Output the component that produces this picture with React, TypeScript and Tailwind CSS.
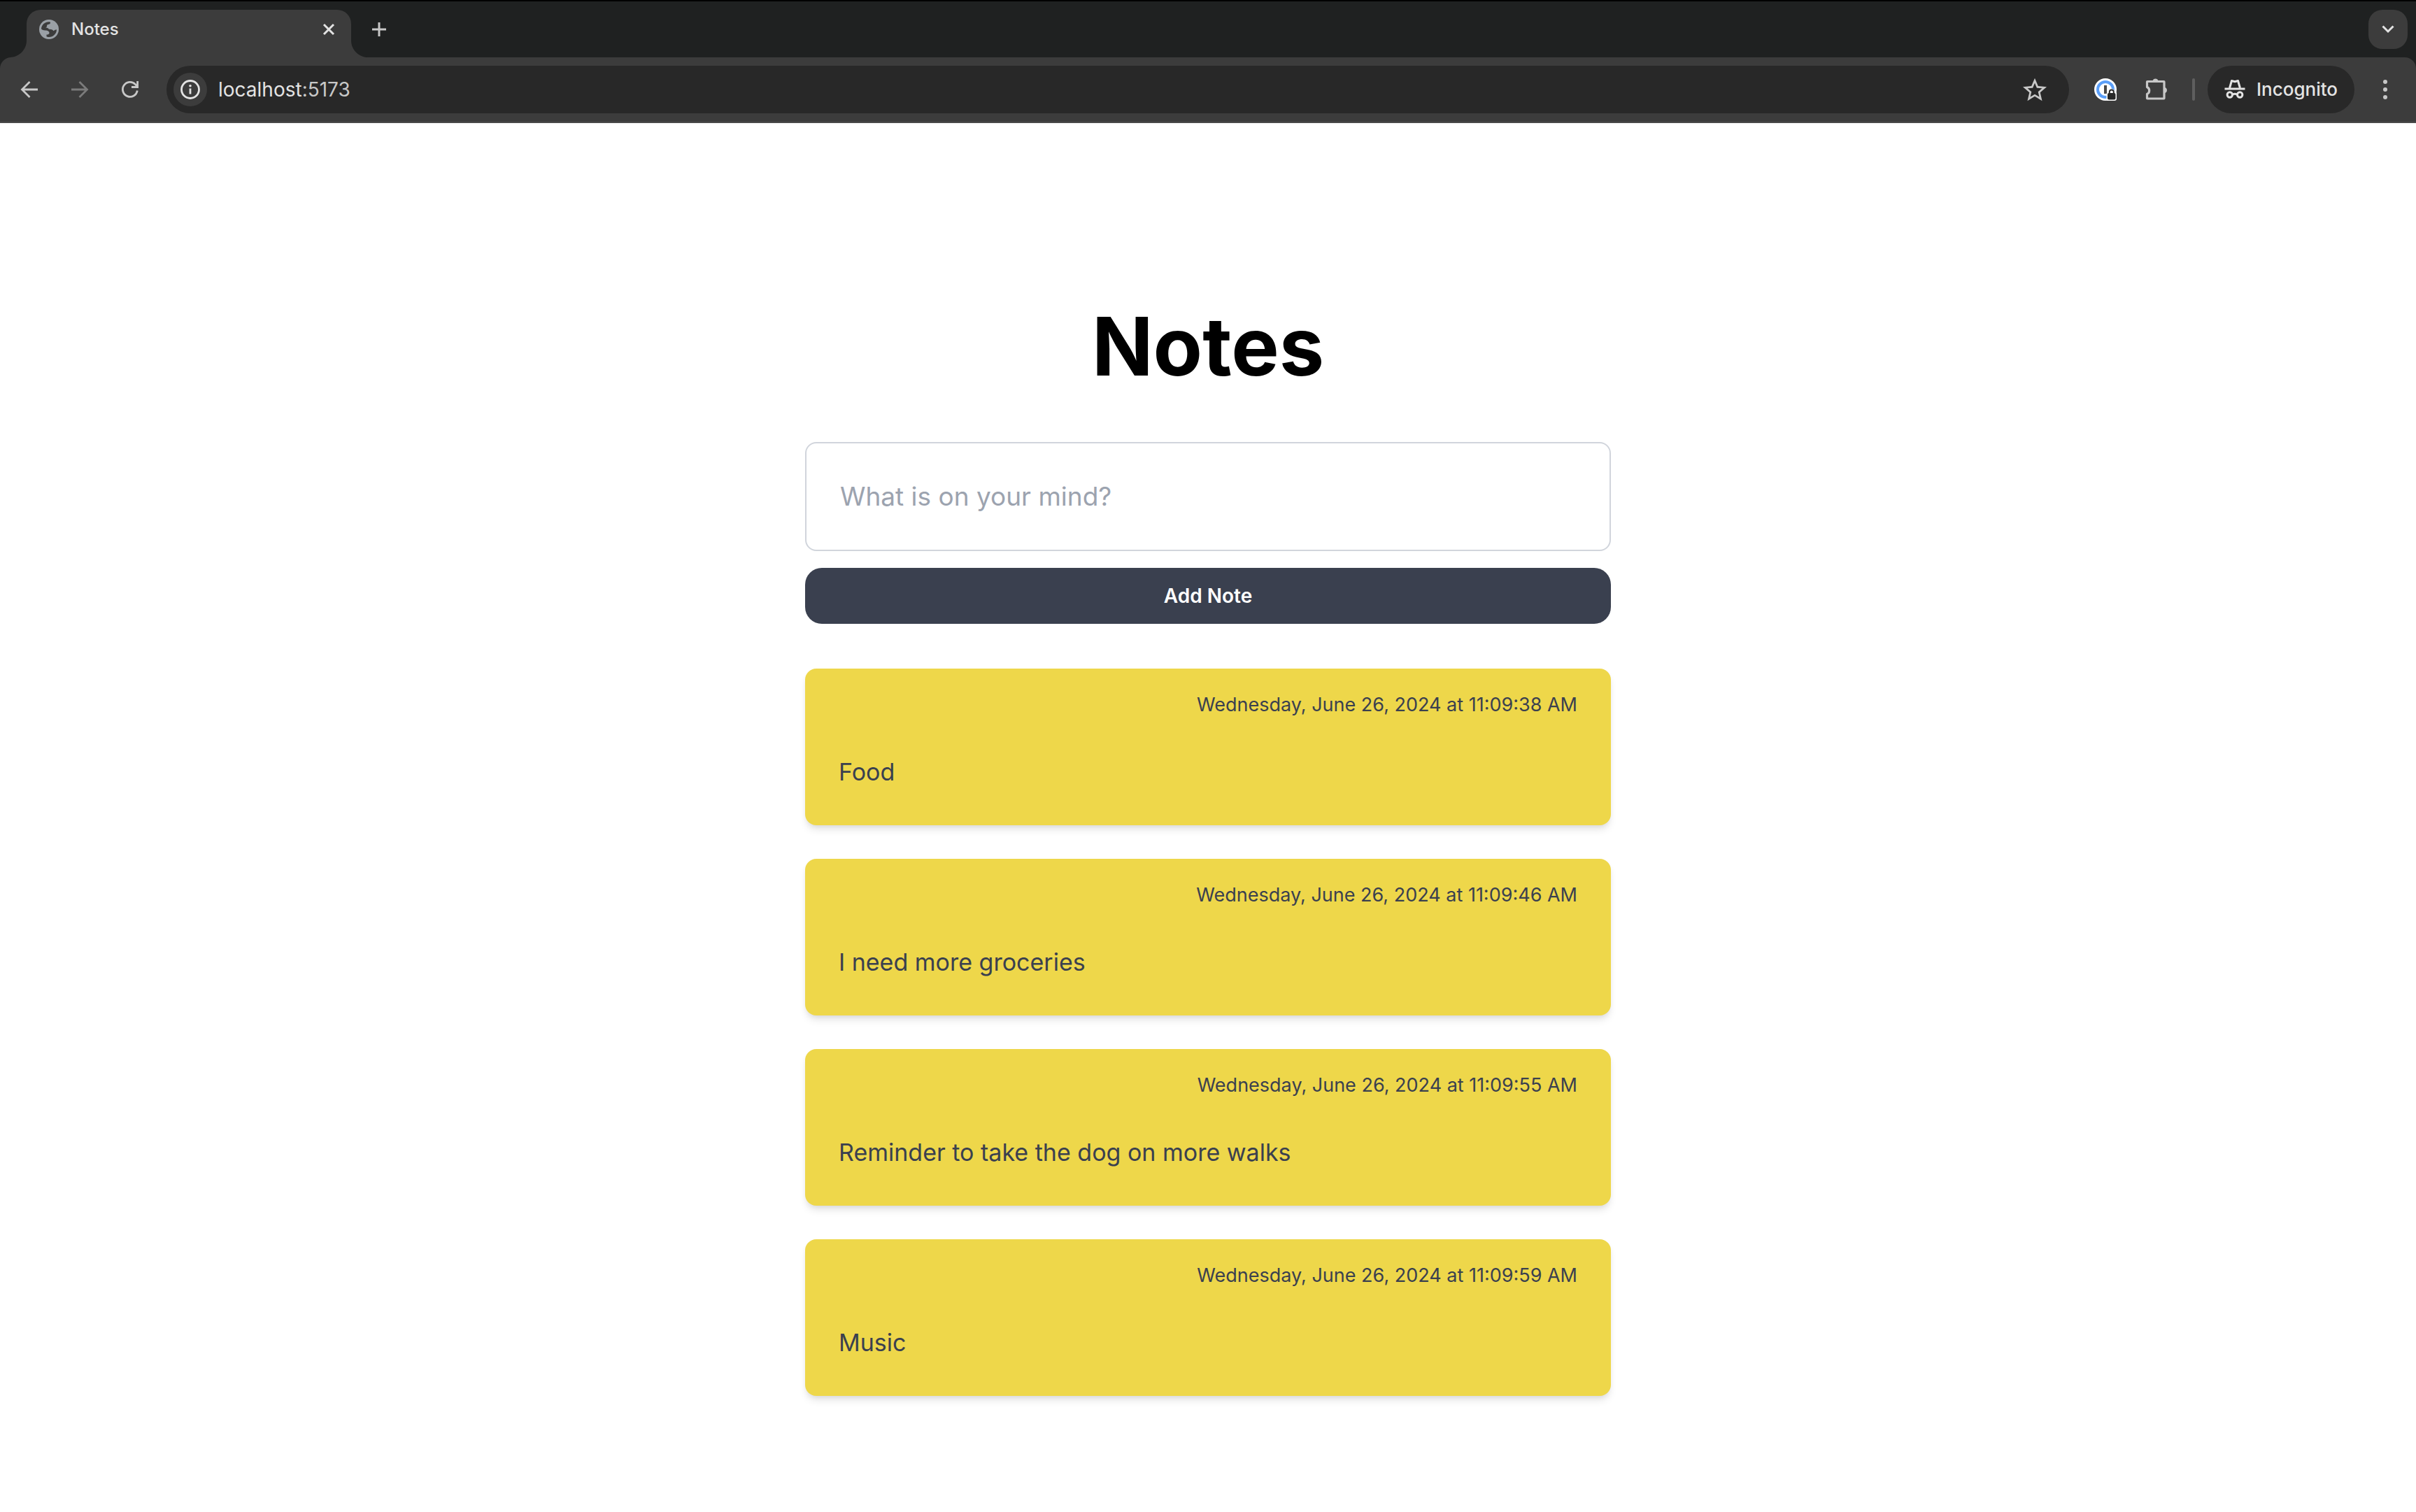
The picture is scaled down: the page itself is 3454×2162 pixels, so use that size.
import React from 'react';

const notes = [
  { date: 'Wednesday, June 26, 2024 at 11:09:38 AM', text: 'Food' },
  { date: 'Wednesday, June 26, 2024 at 11:09:46 AM', text: 'I need more groceries' },
  { date: 'Wednesday, June 26, 2024 at 11:09:55 AM', text: 'Reminder to take the dog on more walks' },
  { date: 'Wednesday, June 26, 2024 at 11:09:59 AM', text: 'Music' },
];

function GlobeIcon() {
  return (
    <svg viewBox="0 0 28 28" className="size-7 shrink-0" aria-hidden="true">
      <circle cx="14" cy="14" r="14" fill="#9aa0a6" />
      <path d="M3 13C3.500 7.500 8 3.200 14 3.200C15.500 3.200 16 3.600 16 4.500C16 6 14.500 7 12.500 7C11.500 7 11 8 11 9.500C11 11 9.500 11.500 8 11.500C11 11.500 13.500 12 14 14C15 13.500 19 13.800 20.500 16.200C22 15 23.500 14.200 25 14.200C25 20 20 25 14 25C12.500 25 11 24.600 10.500 24.200L10.500 21.500C12.500 21.500 14.500 21 14.500 19C14.500 17 12 15.500 9 15.500C6 15.500 3.200 14.500 3 13Z" fill="#3c3c3c" />
    </svg>
  );
}

function TabFlare({ flip }: { flip?: boolean }) {
  return (
    <svg viewBox="0 0 24 24" className={flip ? 'size-6 -scale-x-100' : 'size-6'} aria-hidden="true">
      <path d="M24 0V24H0C13 24 24 13 24 0Z" fill="#3c3c3c" />
    </svg>
  );
}

function TabStrip() {
  return (
    <div className="flex items-center justify-between border-t-2 border-black bg-[#1f2121] h-[82px] pl-[14px] pr-3">
      <div className="flex self-stretch">
        <div className="self-end"><TabFlare /></div>
        <div className="mt-3 flex w-[464px] items-center rounded-t-[20px] bg-[#3c3c3c] pl-[18px] pr-[22px] pb-3">
          <GlobeIcon />
          <span className="ml-[18px] flex-1 text-[24px] leading-8 font-medium text-[#e3e3e3]">Notes</span>
          <button type="button" aria-label="Close tab" className="text-[#e3e3e3]">
            <svg viewBox="0 0 20 20" className="size-5" aria-hidden="true">
              <path d="M3 3L17 17M17 3L3 17" stroke="currentColor" strokeWidth="3" />
            </svg>
          </button>
        </div>
        <div className="self-end"><TabFlare flip /></div>
        <button type="button" aria-label="New tab" className="mb-3 mt-3 ml-1 text-[#c7c7c7]">
          <svg viewBox="0 0 24 24" className="size-6" aria-hidden="true">
            <path d="M12 2V22M2 12H22" stroke="currentColor" strokeWidth="3" />
          </svg>
        </button>
      </div>
      <button type="button" aria-label="Search tabs" className="flex size-14 items-center justify-center rounded-[20px] bg-[#3c3c3c] text-[#e3e3e3]">
        <svg viewBox="0 0 20 12" className="h-3 w-5" aria-hidden="true">
          <path d="M2.500 1.500L10 9L17.500 1.500" fill="none" stroke="currentColor" strokeWidth="3" />
        </svg>
      </button>
    </div>
  );
}

function IncognitoIcon() {
  return (
    <svg viewBox="0 0 30 30" className="size-[30px]" fill="none" stroke="currentColor" strokeWidth="3" aria-hidden="true">
      <path d="M0.500 14H29.500" />
      <path d="M7.500 13L10.500 2.500L15 3.800L19.500 2.500L22.500 13" strokeLinejoin="round" />
      <circle cx="7.800" cy="22.500" r="3.700" />
      <circle cx="22.200" cy="22.500" r="3.700" />
      <path d="M11.500 22.300Q15 20.300 18.500 22.300" />
    </svg>
  );
}

function Toolbar() {
  return (
    <div className="bg-[#1f2121]">
      <div className="flex items-center rounded-t-[16px] border-b-2 border-[#4a4a4a] bg-[#3c3c3c] pt-3 pb-3 pl-7 pr-[30px] text-[#c7c7c7]">
        <button type="button" aria-label="Back">
          <svg viewBox="0 0 28 28" className="size-7" fill="none" stroke="currentColor" strokeWidth="2.800" aria-hidden="true">
            <path d="M26 14H4M14.500 3L3.500 14L14.500 25" />
          </svg>
        </button>
        <button type="button" aria-label="Forward" className="ml-11 text-[#7b7b7b]">
          <svg viewBox="0 0 28 28" className="size-7" fill="none" stroke="currentColor" strokeWidth="2.800" aria-hidden="true">
            <path d="M2 14H24M13.500 3L24.500 14L13.500 25" />
          </svg>
        </button>
        <button type="button" aria-label="Reload" className="ml-11">
          <svg viewBox="0 0 28 28" className="size-7" fill="none" stroke="currentColor" strokeWidth="2.800" aria-hidden="true">
            <path d="M24.300 15.500A10.500 10.500 0 1 1 21.500 6.600L24.500 10M24.600 2V10.500H16" />
          </svg>
        </button>
        <div className="ml-[38px] flex h-[68px] flex-1 items-center rounded-full bg-[#282828] pl-[10px] pr-8">
          <button type="button" aria-label="Site information" className="flex size-12 items-center justify-center rounded-full bg-[#3c3c3c] text-[#e3e3e3]">
            <svg viewBox="0 0 28 28" className="size-7" aria-hidden="true">
              <circle cx="14" cy="14" r="12.500" fill="none" stroke="currentColor" strokeWidth="2.800" />
              <path d="M14 12.500V20.500" stroke="currentColor" strokeWidth="2.800" />
              <circle cx="14" cy="8.800" r="1.800" fill="currentColor" />
            </svg>
          </button>
          <span className="ml-4 flex-1 text-[28px] leading-9 text-[#c7c7c7]"><span className="text-[#e3e3e3]">localhost</span>:5173</span>
          <button type="button" aria-label="Bookmark this page">
            <svg viewBox="2 1.500 20 20" className="size-[34px]" fill="currentColor" aria-hidden="true">
              <path d="M22 9.240l-7.190-.620L12 2 9.190 8.630 2 9.240l5.460 4.730L5.820 21 12 17.270 18.180 21l-1.630-7.030L22 9.240zM12 15.400l-3.760 2.270 1-4.280-3.320-2.880 4.380-.380L12 6.100l1.710 4.040 4.380.380-3.320 2.880 1 4.280L12 15.400z" />
            </svg>
          </button>
        </div>
        <button type="button" aria-label="Password manager" className="ml-9">
          <svg viewBox="0 0 34 34" className="size-[34px]" aria-hidden="true">
            <circle cx="16" cy="17" r="16" fill="#ffffff" />
            <circle cx="16" cy="17" r="11" fill="#ffffff" stroke="#5b9ff9" strokeWidth="4" />
            <rect x="14" y="11" width="4" height="12" fill="#4a4a4a" />
            <path d="M17.500 25Q17.500 19.500 21 18.500A4.500 4.500 0 0 1 29 18.500Q32 20 32 22V30Q32 33 29 33H17.500Z" fill="#ffffff" />
            <rect x="19" y="22" width="11.500" height="9.500" rx="2" fill="#282828" />
            <path d="M21.800 23V20.500A3 3 0 0 1 27.800 20.500V23" fill="none" stroke="#282828" strokeWidth="2" />
          </svg>
        </button>
        <button type="button" aria-label="Extensions" className="ml-[38px]">
          <svg viewBox="0 0 34 34" className="size-[34px]" aria-hidden="true">
            <path d="M4 5.500H27.500Q28 5.500 28 6V29.500Q28 30 27.500 30H4Q3.500 30 3.500 29.500V23.500A5.500 5.500 0 0 0 3.500 13.500V6Q3.500 5.500 4 5.500Z" fill="none" stroke="currentColor" strokeWidth="3.200" strokeLinejoin="round" />
            <path d="M11.500 4.500A4.200 4.200 0 0 1 19.500 4.500Z" fill="currentColor" />
            <path d="M29 14A4.200 4.200 0 0 1 29 22Z" fill="currentColor" />
          </svg>
        </button>
        <div className="ml-[34px] h-8 w-1 rounded-full bg-[#5f5f5f]" />
        <button type="button" className="ml-[18px] flex h-[68px] items-center gap-4 rounded-full bg-[#282828] px-6 text-[#e3e3e3]">
          <IncognitoIcon />
          <span className="text-[26px] leading-9 font-medium">Incognito</span>
        </button>
        <button type="button" aria-label="Menu" className="ml-[30px]">
          <svg viewBox="0 0 28 32" className="h-8 w-7" fill="currentColor" aria-hidden="true">
            <circle cx="14" cy="5" r="3" />
            <circle cx="14" cy="16" r="3" />
            <circle cx="14" cy="27" r="3" />
          </svg>
        </button>
      </div>
    </div>
  );
}

export default function App() {
  return (
    <div className="min-h-screen bg-white font-['Inter',sans-serif]">
      <header>
        <TabStrip />
        <Toolbar />
      </header>
      <main className="mx-auto flex w-full max-w-[1152px] flex-col pt-64 pb-24">
        <h1 className="text-center text-[115px] leading-[128px] font-bold text-black">Notes</h1>
        <form className="mt-[72px] flex flex-col gap-6" onSubmit={(e) => e.preventDefault()}>
          <input
            type="text"
            aria-label="New note"
            placeholder="What is on your mind?"
            className="w-full rounded-2xl border-2 border-gray-300 px-12 py-12 text-[37px] leading-[56px] text-gray-700 placeholder:text-[#9ca3af]"
          />
          <button type="submit" className="w-full rounded-3xl bg-[#3a404f] py-5 text-[28px] leading-10 font-semibold text-white">
            Add Note
          </button>
        </form>
        <ul className="mt-16 flex flex-col gap-12">
          {notes.map((note) => (
            <li key={note.date} className="flex flex-col gap-12 rounded-2xl bg-[#eed74a] px-12 pt-8 pb-12 text-[#3a404f] shadow-[0_8px_12px_-2px_rgba(0,0,0,0.1),0_4px_8px_-4px_rgba(0,0,0,0.1)]">
              <time className="text-right text-[27px] leading-10">{note.date}</time>
              <p className="text-[34px] leading-[56px]">{note.text}</p>
            </li>
          ))}
        </ul>
      </main>
    </div>
  );
}
